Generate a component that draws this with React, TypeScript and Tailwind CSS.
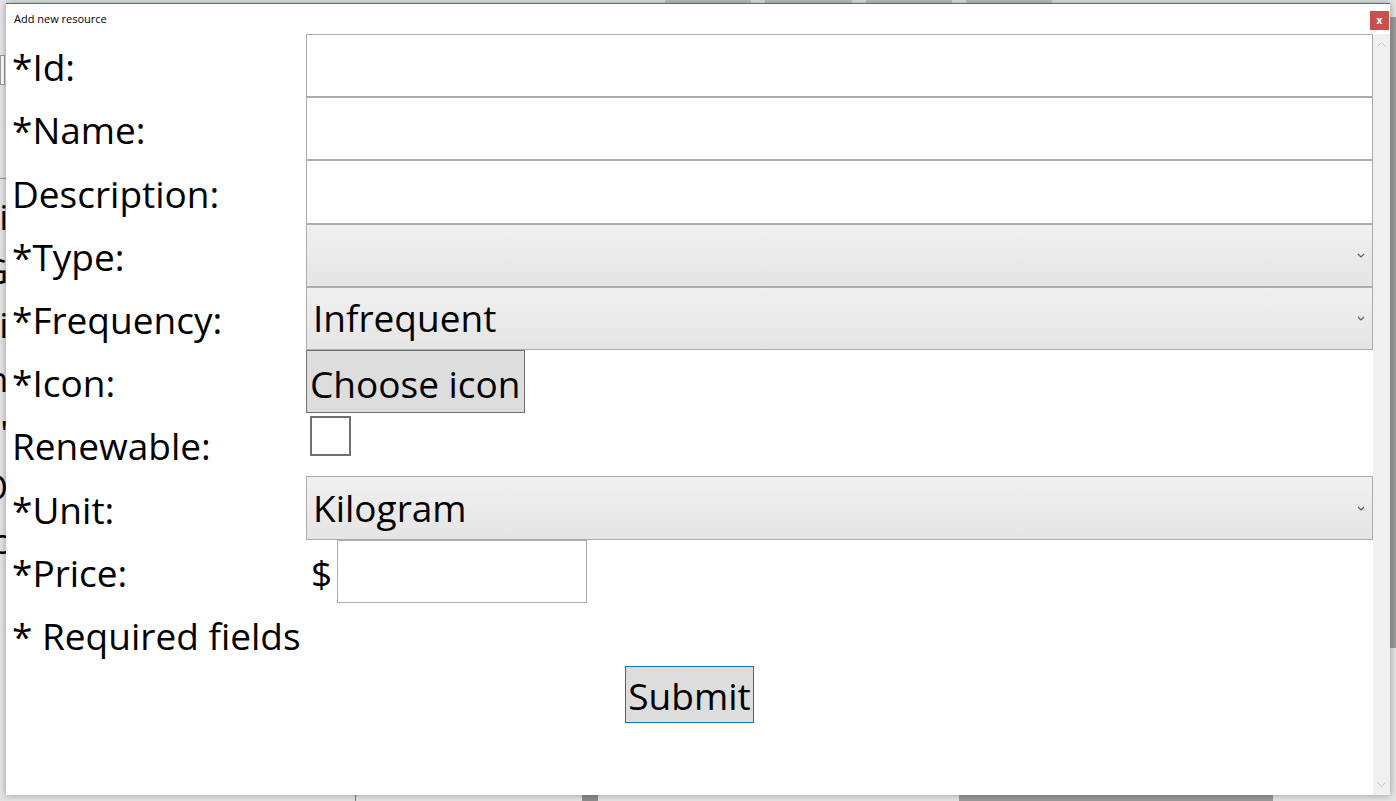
import React from "react";

const font = { fontFamily: '"Open Sans", "Noto Sans", sans-serif' };

const Chevron: React.FC = () => (
  <svg width="8" height="5" viewBox="0 0 8 5" className="shrink-0">
    <path d="M1 1 L4 4 L7 1" fill="none" stroke="#5f5f5f" strokeWidth="1.2" />
  </svg>
);

const Label: React.FC<{ text: string }> = ({ text }) => (
  <div className="h-full flex items-center pl-[6px] pt-[3px] text-[37px] text-black whitespace-nowrap">
    {text}
  </div>
);

const TextBox: React.FC<{ className?: string }> = ({ className = "" }) => (
  <input
    type="text"
    className={`h-full bg-white border border-[#acacac] outline-none ${className}`}
  />
);

const Combo: React.FC<{ value?: string }> = ({ value }) => (
  <div className="h-full flex items-center justify-between pl-[6px] pr-[7px] border border-[#acacac] bg-linear-to-b from-[#f0f0f0] to-[#e5e5e5] text-[37px] text-black">
    <span className="-mt-px">{value ?? ""}</span>
    <Chevron />
  </div>
);

// glyph edges of the app behind the dialog
const peek = ["i", "G", "i", "n", "'", "O", "c"];

export default function App() {
  return (
    <div className="relative w-[1396px] h-[801px] overflow-hidden bg-[#e4e4e4]" style={font}>
      {/* background app peeking around the dialog */}
      <div className="absolute top-0 left-[665px] w-[86px] h-[3px] bg-[#c2c2c2]" />
      <div className="absolute top-0 left-[765px] w-[87px] h-[3px] bg-[#c2c2c2]" />
      <div className="absolute top-0 left-[866px] w-[86px] h-[3px] bg-[#c2c2c2]" />
      <div className="absolute top-0 left-[966px] w-[86px] h-[3px] bg-[#c2c2c2]" />
      <div className="absolute top-[17px] right-0 w-[8px] h-[631px] bg-[#9c9c9c]" />
      <div className="absolute bottom-0 left-[355px] w-px h-[8px] bg-[#7a7a7a]" />
      <div className="absolute bottom-0 left-[582px] w-[16px] h-[8px] bg-[#8d8d8d]" />
      <div className="absolute bottom-0 left-[959px] w-[314px] h-[8px] bg-[#9a9a9a]" />
      <div className="absolute top-[55px] left-0 w-[5px] h-[30px] border border-[#9a9a9a] bg-white" />
      <div className="absolute top-[178px] left-0 w-[6px] h-px bg-[#9a9a9a]" />
      <div className="absolute top-[190px] left-0 w-[6px] flex flex-col">
        {peek.map((ch, i) => (
          <div
            key={i}
            className="w-[6px] h-[54px] overflow-hidden flex justify-end text-[34px] leading-[54px] text-black whitespace-nowrap"
          >
            <span className="shrink-0 -mr-[2px]">{ch}</span>
          </div>
        ))}
      </div>

      {/* dialog window */}
      <div className="absolute left-[6px] top-[3px] w-[1384px] h-[792px] flex flex-col bg-white border-t border-[#2b78c9] shadow-[0_0_7px_rgba(0,0,0,0.35)]">
        <div className="h-[30px] flex items-start justify-between">
          <span className="pl-[8px] pt-[7px] text-[11px] text-black">Add new resource</span>
          <div className="mt-[7px] mr-px w-[19px] h-[19px] bg-[#c75050] flex items-center justify-center text-white text-[10px] font-bold leading-none pb-[2px]">
            x
          </div>
        </div>

        <div className="flex-1 flex min-h-0">
          <div className="flex-1 flex flex-col">
            <div className="grid grid-cols-[300px_1fr]">
              <div className="h-[63px]"><Label text="*Id:" /></div>
              <div className="h-[63px] flex"><TextBox className="w-full" /></div>

              <div className="h-[63px]"><Label text="*Name:" /></div>
              <div className="h-[63px] flex"><TextBox className="w-full" /></div>

              <div className="h-[64px]"><Label text="Description:" /></div>
              <div className="h-[64px] flex"><TextBox className="w-full" /></div>

              <div className="h-[63px]"><Label text="*Type:" /></div>
              <div className="h-[63px]"><Combo /></div>

              <div className="h-[63px]"><Label text="*Frequency:" /></div>
              <div className="h-[63px]"><Combo value="Infrequent" /></div>

              <div className="h-[63px]"><Label text="*Icon:" /></div>
              <div className="h-[63px] flex">
                <button className="h-full px-[3px] border border-[#707070] bg-[#dddddd] text-[37px] text-black leading-none pt-[3px]">
                  Choose icon
                </button>
              </div>

              <div className="h-[63px]"><Label text="Renewable:" /></div>
              <div className="h-[63px] pl-[4px] pt-[3px]">
                <div className="w-[41px] h-[40px] border-2 border-[#707070] bg-white" />
              </div>

              <div className="h-[64px]"><Label text="*Unit:" /></div>
              <div className="h-[64px]"><Combo value="Kilogram" /></div>

              <div className="h-[63px]"><Label text="*Price:" /></div>
              <div className="h-[63px] flex items-center">
                <span className="w-[31px] pl-[5px] pt-[3px] text-[37px] text-black">$</span>
                <TextBox className="w-[250px]" />
              </div>

              <div className="h-[63px] col-span-2"><Label text="* Required fields" /></div>
            </div>

            <div className="flex justify-center">
              <button className="h-[57px] px-[2px] border border-[#0078d7] bg-[#dddddd] text-[37px] text-black leading-none pt-[2px]">
                Submit
              </button>
            </div>
          </div>

          <div className="w-[17px] bg-[#f0f0f0] flex flex-col items-center justify-between py-[8px]">
            <svg width="9" height="5" viewBox="0 0 9 5">
              <path d="M0.5 4.5 L4.5 0.5 L8.5 4.5" fill="none" stroke="#c8c8c8" strokeWidth="1" />
            </svg>
            <svg width="9" height="5" viewBox="0 0 9 5">
              <path d="M0.5 0.5 L4.5 4.5 L8.5 0.5" fill="none" stroke="#c8c8c8" strokeWidth="1" />
            </svg>
          </div>
        </div>
      </div>
    </div>
  );
}
